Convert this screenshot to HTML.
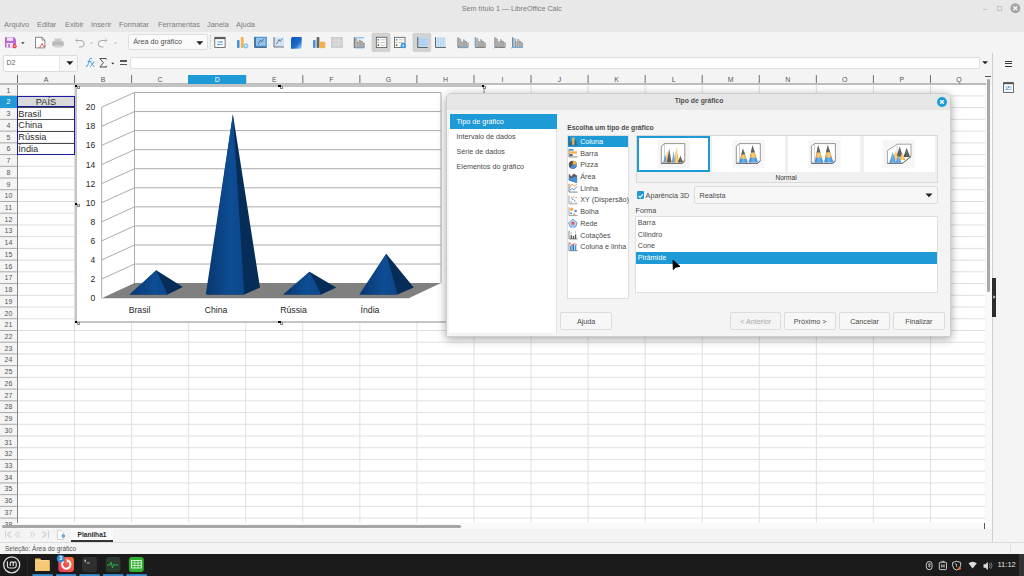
<!DOCTYPE html>
<html><head><meta charset="utf-8">
<style>
*{margin:0;padding:0;box-sizing:border-box}
html,body{width:1024px;height:576px;overflow:hidden;background:#f4f4f4;font-family:"Liberation Sans",sans-serif;color:#3c3c3c}
.a{position:absolute}
.t{position:absolute;white-space:nowrap;line-height:1}
</style></head><body>

<div class="a" style="left:0;top:0;width:1024px;height:32px;background:#e8e8e8"></div>
<div class="t" style="left:411.75px;top:5.6px;width:200px;text-align:center;font-size:7.15px;color:#7a7a7a">Sem título 1 — LibreOffice Calc</div>
<div class="t" style="left:4px;top:21.2px;font-size:7.4px;color:#7c7c7c">Arquivo</div>
<div class="t" style="left:37px;top:21.2px;font-size:7.4px;color:#7c7c7c">Editar</div>
<div class="t" style="left:65px;top:21.2px;font-size:7.4px;color:#7c7c7c">Exibir</div>
<div class="t" style="left:91px;top:21.2px;font-size:7.4px;color:#7c7c7c">Inserir</div>
<div class="t" style="left:119px;top:21.2px;font-size:7.4px;color:#7c7c7c">Formatar</div>
<div class="t" style="left:158px;top:21.2px;font-size:7.4px;color:#7c7c7c">Ferramentas</div>
<div class="t" style="left:207px;top:21.2px;font-size:7.4px;color:#7c7c7c">Janela</div>
<div class="t" style="left:236px;top:21.2px;font-size:7.4px;color:#7c7c7c">Ajuda</div>
<div class="a" style="left:0;top:32px;width:1024px;height:21px;background:#f4f4f4"></div>
<svg class="a" style="left:0;top:30px" width="540" height="26" viewBox="0 30 540 26"><path d="M5 37.2h9l2 2v8.3h-11z" fill="#b96ad0"/><rect x="7" y="37.6" width="6" height="3.2" fill="#f2e6f6"/><rect x="6.5" y="43" width="6.5" height="4.5" fill="#f2e6f6"/><rect x="8.3" y="44" width="1.6" height="3.5" fill="#b96ad0"/><circle cx="14.6" cy="46.3" r="2.1" fill="#e8474f"/><circle cx="14.6" cy="46.3" r="0.8" fill="#f8c8c8"/><path d="M21.2 42.2h3.4l-1.7 1.9z" fill="#222"/><path d="M35.5 37.3h6.5l2.8 2.8v7.8h-9.3z" fill="#fff" stroke="#555" stroke-width="0.7"/><path d="M42 37.3v2.8h2.8" fill="none" stroke="#555" stroke-width="0.6"/><path d="M39.5 48l2.5-4.5 1.5 3 2-0.5" fill="none" stroke="#e64a4a" stroke-width="0.9"/><rect x="54.5" y="38.5" width="7" height="3" fill="#c8c8c8"/><rect x="52.3" y="41.2" width="11.4" height="5" rx="1" fill="#b8b8b8"/><rect x="54.5" y="45" width="7" height="2.5" fill="#cfcfcf"/><path d="M75.5 40.5h5.5a3 3 0 0 1 0 6.5h-2" fill="none" stroke="#a8a8a8" stroke-width="1"/><path d="M77.8 38.2l-2.5 2.3 2.5 2.3" fill="none" stroke="#c8c8c8" stroke-width="1"/><path d="M90 42.4h3l-1.5 1.6z" fill="#b4b4b4"/><path d="M107 40.5h-5.5a3 3 0 0 0 0 6.5h2" fill="none" stroke="#a8a8a8" stroke-width="1"/><path d="M104.7 38.2l2.5 2.3-2.5 2.3" fill="none" stroke="#c8c8c8" stroke-width="1"/><path d="M114 42.4h3l-1.5 1.6z" fill="#b4b4b4"/><rect x="214.8" y="37.3" width="10.3" height="10.2" fill="#fff" stroke="#555" stroke-width="0.8"/><rect x="214.8" y="37.3" width="10.3" height="1.8" fill="#555"/><path d="M216.8 42h6.3M216.8 44.5h6.3" stroke="#3d8fd6" stroke-width="0.7"/><path d="M220.8 41v2M218.8 43.5v2" stroke="#3d8fd6" stroke-width="0.8"/><rect x="237" y="40" width="2.6" height="8" rx="0.8" fill="#4a90d9"/><rect x="240.8" y="37" width="2.8" height="11" rx="0.8" fill="#f3b04c"/><circle cx="245.8" cy="45.8" r="2.6" fill="#8cc4ef"/><circle cx="245.8" cy="45.8" r="1" fill="#f4f4f4"/><rect x="254" y="36.8" width="12.8" height="11" fill="#3d8fd6"/><rect x="255.8" y="37.8" width="9.8" height="8" fill="#90c4ee"/><path d="M255.2 37v10.3h11.3" stroke="#555" stroke-width="0.8" fill="none"/><path d="M258 44.5l2.5-4.5 1.2 2 2-3" stroke="#555" stroke-width="0.7" fill="none"/><rect x="273.5" y="37.5" width="10.5" height="9.5" fill="#cfe3f6"/><path d="M274 37v10h10" stroke="#555" stroke-width="0.8" fill="none"/><path d="M276.5 44l2.5-4.5 1.2 2 2-3" stroke="#555" stroke-width="0.7" fill="none"/><defs><linearGradient id="bg1" x1="0" y1="0" x2="1" y2="1"><stop offset="0" stop-color="#0a55b8"/><stop offset="0.6" stop-color="#1a6ccc"/><stop offset="1" stop-color="#bcd8f2"/></linearGradient></defs><path d="M292 37h9.7v10.3l-1.5 1.4h-9.2v-10.2z" fill="url(#bg1)"/><rect x="313" y="40" width="2.6" height="8" rx="0.8" fill="#4a90d9"/><rect x="316.6" y="37" width="2.8" height="11" rx="0.8" fill="#666"/><ellipse cx="322.4" cy="42.8" rx="2.9" ry="1.3" fill="#f3b04c"/><rect x="319.5" y="42.8" width="5.8" height="4.2" fill="#f3b04c"/><ellipse cx="322.4" cy="47" rx="2.9" ry="1.3" fill="#f3b04c"/><rect x="331.3" y="37.3" width="11" height="10.3" fill="#d0d0d0" stroke="#bdbdbd" stroke-width="0.6"/><path d="M331.3 40.7h11M331.3 44.1h11M335 37.3v10.3M338.6 37.3v10.3" stroke="#e6e6e6" stroke-width="0.5"/><rect x="354" y="37" width="10" height="1.4" fill="#8cc4ef"/><path d="M354.3 37.5v10h10" stroke="#3a3a3a" stroke-width="0.8" fill="none"/><rect x="355.7" y="39" width="1.3" height="8.5" fill="#c8c8c8" stroke="#6a6a6a" stroke-width="0.4"/><rect x="357.6" y="42" width="1.3" height="5.5" fill="#c8c8c8" stroke="#6a6a6a" stroke-width="0.4"/><rect x="359.5" y="40" width="1.3" height="7.5" fill="#c8c8c8" stroke="#6a6a6a" stroke-width="0.4"/><rect x="361.4" y="41.5" width="1.3" height="6" fill="#c8c8c8" stroke="#6a6a6a" stroke-width="0.4"/><rect x="363.3" y="43" width="1.3" height="4.5" fill="#c8c8c8" stroke="#6a6a6a" stroke-width="0.4"/><rect x="355" y="47.5" width="9" height="1" fill="#8cc4ef"/><rect x="372" y="33.2" width="18" height="18.4" rx="1.5" fill="#d2d2d2" stroke="#c2c2c2" stroke-width="0.6"/><rect x="376.3" y="37.3" width="10.5" height="10.3" fill="#fff" stroke="#555" stroke-width="0.8"/><rect x="377.6" y="39" width="1.5" height="1.5" fill="#3d8fd6"/><rect x="377.6" y="41.7" width="1.5" height="1.5" fill="#f3a04c"/><rect x="377.6" y="44.4" width="1.5" height="1.5" fill="#555"/><path d="M380.3 39.8h5M380.3 42.5h5M380.3 45.2h5" stroke="#999" stroke-width="0.6"/><rect x="394.5" y="37.3" width="10.5" height="10.3" fill="#fff" stroke="#555" stroke-width="0.8"/><rect x="395.8" y="39" width="1.5" height="1.5" fill="#3d8fd6"/><rect x="395.8" y="41.7" width="1.5" height="1.5" fill="#f3a04c"/><rect x="395.8" y="44.4" width="1.5" height="1.5" fill="#555"/><path d="M398.5 39.8h5M398.5 42.5h5" stroke="#999" stroke-width="0.6"/><circle cx="403.3" cy="45.5" r="2.7" fill="#3d9ee6"/><circle cx="403.3" cy="45.5" r="1" fill="#d8ecfa"/><rect x="413" y="33.2" width="17.7" height="18.4" rx="1.5" fill="#d2d2d2" stroke="#c2c2c2" stroke-width="0.6"/><rect x="418" y="37.3" width="9.5" height="9.8" fill="#b9d9f3"/><path d="M418 39.7h9.5M418 42.1h9.5M418 44.5h9.5" stroke="#8abde8" stroke-width="0.5"/><path d="M417.7 37v10.5h10" stroke="#444" stroke-width="0.8" fill="none"/><rect x="435.8" y="37.3" width="10" height="9.8" fill="#cfe5f7"/><path d="M438.3 37.3v9.8M440.8 37.3v9.8M443.3 37.3v9.8" stroke="#8abde8" stroke-width="0.5"/><path d="M435.5 37v10.5h10.5" stroke="#444" stroke-width="0.8" fill="none"/><path d="M458 37.3v10h10" stroke="#3a3a3a" stroke-width="0.8" fill="none"/><rect x="459.4" y="38.8" width="1.3" height="8.5" fill="#c8c8c8" stroke="#6a6a6a" stroke-width="0.4"/><rect x="461.3" y="41.8" width="1.3" height="5.5" fill="#c8c8c8" stroke="#6a6a6a" stroke-width="0.4"/><rect x="463.2" y="39.8" width="1.3" height="7.5" fill="#c8c8c8" stroke="#6a6a6a" stroke-width="0.4"/><rect x="465.1" y="41.3" width="1.3" height="6" fill="#c8c8c8" stroke="#6a6a6a" stroke-width="0.4"/><rect x="467" y="42.8" width="1.3" height="4.5" fill="#c8c8c8" stroke="#6a6a6a" stroke-width="0.4"/><rect x="459" y="47.3" width="9" height="0.9" fill="#6db3ec"/><path d="M475.3 37.3v10h10" stroke="#3a3a3a" stroke-width="0.8" fill="none"/><rect x="476.7" y="38.8" width="1.3" height="8.5" fill="#c8c8c8" stroke="#6a6a6a" stroke-width="0.4"/><rect x="478.6" y="41.8" width="1.3" height="5.5" fill="#c8c8c8" stroke="#6a6a6a" stroke-width="0.4"/><rect x="480.5" y="39.8" width="1.3" height="7.5" fill="#c8c8c8" stroke="#6a6a6a" stroke-width="0.4"/><rect x="482.4" y="41.3" width="1.3" height="6" fill="#c8c8c8" stroke="#6a6a6a" stroke-width="0.4"/><rect x="484.3" y="42.8" width="1.3" height="4.5" fill="#c8c8c8" stroke="#6a6a6a" stroke-width="0.4"/><rect x="475" y="37.5" width="0.9" height="10" fill="#6db3ec"/><path d="M495 37.3v10h10" stroke="#3a3a3a" stroke-width="0.8" fill="none"/><rect x="496.4" y="38.8" width="1.3" height="8.5" fill="#c8c8c8" stroke="#6a6a6a" stroke-width="0.4"/><rect x="498.3" y="41.8" width="1.3" height="5.5" fill="#c8c8c8" stroke="#6a6a6a" stroke-width="0.4"/><rect x="500.2" y="39.8" width="1.3" height="7.5" fill="#c8c8c8" stroke="#6a6a6a" stroke-width="0.4"/><rect x="502.1" y="41.3" width="1.3" height="6" fill="#c8c8c8" stroke="#6a6a6a" stroke-width="0.4"/><rect x="504" y="42.8" width="1.3" height="4.5" fill="#c8c8c8" stroke="#6a6a6a" stroke-width="0.4"/><path d="M493.6 48.5l3-2.8" stroke="#6db3ec" stroke-width="0.9"/><path d="M512.5 37.3v10h10" stroke="#3a3a3a" stroke-width="0.8" fill="none"/><rect x="513.9" y="38.8" width="1.3" height="8.5" fill="#c8c8c8" stroke="#6a6a6a" stroke-width="0.4"/><rect x="515.8" y="41.8" width="1.3" height="5.5" fill="#c8c8c8" stroke="#6a6a6a" stroke-width="0.4"/><rect x="517.7" y="39.8" width="1.3" height="7.5" fill="#c8c8c8" stroke="#6a6a6a" stroke-width="0.4"/><rect x="519.6" y="41.3" width="1.3" height="6" fill="#c8c8c8" stroke="#6a6a6a" stroke-width="0.4"/><rect x="521.5" y="42.8" width="1.3" height="4.5" fill="#c8c8c8" stroke="#6a6a6a" stroke-width="0.4"/><path d="M511 48.5l3-2.8" stroke="#6db3ec" stroke-width="0.9"/><rect x="512.5" y="37.5" width="0.9" height="10" fill="#6db3ec"/><rect x="513" y="47" width="9" height="0.9" fill="#6db3ec"/></svg>
<div class="a" style="left:127.8px;top:33.8px;width:80.4px;height:16.5px;background:#fafafa;border:1px solid #dedede;border-radius:2px"></div>
<div class="t" style="left:133.3px;top:38.4px;font-size:7.2px;color:#505050">Área do gráfico</div>
<svg class="a" style="left:196px;top:40.5px" width="8" height="5"><path d="M0.3 0.3H7.3L3.8 4Z" fill="#222"/></svg>
<div class="a" style="left:209.5px;top:35px;width:0;height:14px;border-left:1px dotted #c0c0c0"></div>
<div class="a" style="left:2.5px;top:54.6px;width:75.7px;height:17px;background:#fff;border:1px solid #dcdcdc;border-radius:2px"></div>
<div class="a" style="left:58.5px;top:55.6px;width:18.7px;height:15px;background:#f7f7f7;border-left:1px solid #e6e6e6"></div>
<svg class="a" style="left:65.5px;top:60.5px" width="8" height="5"><path d="M0.3 0.3H7.3L3.8 4Z" fill="#222"/></svg>
<div class="t" style="left:6.5px;top:59.3px;font-size:7px;color:#666">D2</div>
<svg class="a" style="left:0;top:50px" width="130" height="24" viewBox="0 50 130 24"><path d="M85.8 66.6Q87.6 67.2 88.4 63.5L89.4 59.8Q90.1 57.7 92.2 58.4M87.6 61.4H90.8" fill="none" stroke="#4a9ee0" stroke-width="1"/><path d="M90.3 61.6L94.3 66.8M94.3 61.6L90.3 66.8" stroke="#4a9ee0" stroke-width="1"/><path d="M106.2 59.6V58.5H99.9L103.4 62.8L99.9 67H106.4V65.9" fill="none" stroke="#3c3c3c" stroke-width="0.9"/><path d="M111.2 62.7H114.3L112.75 64.4Z" fill="#222"/></svg>
<div class="a" style="left:120.1px;top:60.3px;width:6.7px;height:1.3px;background:#555"></div>
<div class="a" style="left:120.1px;top:63.8px;width:6.7px;height:1.3px;background:#555"></div>
<div class="a" style="left:129.8px;top:57.4px;width:850.5px;height:11.2px;background:#fff;border:1px solid #dedede;border-radius:2px"></div>
<svg class="a" style="left:982px;top:61px" width="7" height="4"><path d="M0.2 0.2H6L3.1 3.2Z" fill="#222"/></svg>
<div class="a" style="left:0;top:75px;width:986px;height:9.5px;background:#f4f4f4"></div>
<div class="a" style="left:17.5px;top:84.2px;width:967.5px;height:438.5px;background:#fff"></div>
<div class="a" style="left:0;top:84.2px;width:17.5px;height:438.5px;background:#f4f4f4"></div>
<div class="a" style="left:17px;top:84.2px;width:1px;height:438.5px;background:#858585"></div>
<svg class="a" style="left:0;top:0" width="1024" height="576"><line x1="18" x2="985" y1="95.93" y2="95.93" stroke="#e0e0e0" stroke-width="1"/><line x1="0" x2="17" y1="95.93" y2="95.93" stroke="#a8a8a8" stroke-width="1"/><line x1="18" x2="985" y1="107.65" y2="107.65" stroke="#e0e0e0" stroke-width="1"/><line x1="0" x2="17" y1="107.65" y2="107.65" stroke="#a8a8a8" stroke-width="1"/><line x1="18" x2="985" y1="119.38" y2="119.38" stroke="#e0e0e0" stroke-width="1"/><line x1="0" x2="17" y1="119.38" y2="119.38" stroke="#a8a8a8" stroke-width="1"/><line x1="18" x2="985" y1="131.11" y2="131.11" stroke="#e0e0e0" stroke-width="1"/><line x1="0" x2="17" y1="131.11" y2="131.11" stroke="#a8a8a8" stroke-width="1"/><line x1="18" x2="985" y1="142.84" y2="142.84" stroke="#e0e0e0" stroke-width="1"/><line x1="0" x2="17" y1="142.84" y2="142.84" stroke="#a8a8a8" stroke-width="1"/><line x1="18" x2="985" y1="154.56" y2="154.56" stroke="#e0e0e0" stroke-width="1"/><line x1="0" x2="17" y1="154.56" y2="154.56" stroke="#a8a8a8" stroke-width="1"/><line x1="18" x2="985" y1="166.29" y2="166.29" stroke="#e0e0e0" stroke-width="1"/><line x1="0" x2="17" y1="166.29" y2="166.29" stroke="#a8a8a8" stroke-width="1"/><line x1="18" x2="985" y1="178.02" y2="178.02" stroke="#e0e0e0" stroke-width="1"/><line x1="0" x2="17" y1="178.02" y2="178.02" stroke="#a8a8a8" stroke-width="1"/><line x1="18" x2="985" y1="189.74" y2="189.74" stroke="#e0e0e0" stroke-width="1"/><line x1="0" x2="17" y1="189.74" y2="189.74" stroke="#a8a8a8" stroke-width="1"/><line x1="18" x2="985" y1="201.47" y2="201.47" stroke="#e0e0e0" stroke-width="1"/><line x1="0" x2="17" y1="201.47" y2="201.47" stroke="#a8a8a8" stroke-width="1"/><line x1="18" x2="985" y1="213.2" y2="213.2" stroke="#e0e0e0" stroke-width="1"/><line x1="0" x2="17" y1="213.2" y2="213.2" stroke="#a8a8a8" stroke-width="1"/><line x1="18" x2="985" y1="224.92" y2="224.92" stroke="#e0e0e0" stroke-width="1"/><line x1="0" x2="17" y1="224.92" y2="224.92" stroke="#a8a8a8" stroke-width="1"/><line x1="18" x2="985" y1="236.65" y2="236.65" stroke="#e0e0e0" stroke-width="1"/><line x1="0" x2="17" y1="236.65" y2="236.65" stroke="#a8a8a8" stroke-width="1"/><line x1="18" x2="985" y1="248.38" y2="248.38" stroke="#e0e0e0" stroke-width="1"/><line x1="0" x2="17" y1="248.38" y2="248.38" stroke="#a8a8a8" stroke-width="1"/><line x1="18" x2="985" y1="260.11" y2="260.11" stroke="#e0e0e0" stroke-width="1"/><line x1="0" x2="17" y1="260.11" y2="260.11" stroke="#a8a8a8" stroke-width="1"/><line x1="18" x2="985" y1="271.83" y2="271.83" stroke="#e0e0e0" stroke-width="1"/><line x1="0" x2="17" y1="271.83" y2="271.83" stroke="#a8a8a8" stroke-width="1"/><line x1="18" x2="985" y1="283.56" y2="283.56" stroke="#e0e0e0" stroke-width="1"/><line x1="0" x2="17" y1="283.56" y2="283.56" stroke="#a8a8a8" stroke-width="1"/><line x1="18" x2="985" y1="295.29" y2="295.29" stroke="#e0e0e0" stroke-width="1"/><line x1="0" x2="17" y1="295.29" y2="295.29" stroke="#a8a8a8" stroke-width="1"/><line x1="18" x2="985" y1="307.01" y2="307.01" stroke="#e0e0e0" stroke-width="1"/><line x1="0" x2="17" y1="307.01" y2="307.01" stroke="#a8a8a8" stroke-width="1"/><line x1="18" x2="985" y1="318.74" y2="318.74" stroke="#e0e0e0" stroke-width="1"/><line x1="0" x2="17" y1="318.74" y2="318.74" stroke="#a8a8a8" stroke-width="1"/><line x1="18" x2="985" y1="330.47" y2="330.47" stroke="#e0e0e0" stroke-width="1"/><line x1="0" x2="17" y1="330.47" y2="330.47" stroke="#a8a8a8" stroke-width="1"/><line x1="18" x2="985" y1="342.19" y2="342.19" stroke="#e0e0e0" stroke-width="1"/><line x1="0" x2="17" y1="342.19" y2="342.19" stroke="#a8a8a8" stroke-width="1"/><line x1="18" x2="985" y1="353.92" y2="353.92" stroke="#e0e0e0" stroke-width="1"/><line x1="0" x2="17" y1="353.92" y2="353.92" stroke="#a8a8a8" stroke-width="1"/><line x1="18" x2="985" y1="365.65" y2="365.65" stroke="#e0e0e0" stroke-width="1"/><line x1="0" x2="17" y1="365.65" y2="365.65" stroke="#a8a8a8" stroke-width="1"/><line x1="18" x2="985" y1="377.38" y2="377.38" stroke="#e0e0e0" stroke-width="1"/><line x1="0" x2="17" y1="377.38" y2="377.38" stroke="#a8a8a8" stroke-width="1"/><line x1="18" x2="985" y1="389.1" y2="389.1" stroke="#e0e0e0" stroke-width="1"/><line x1="0" x2="17" y1="389.1" y2="389.1" stroke="#a8a8a8" stroke-width="1"/><line x1="18" x2="985" y1="400.83" y2="400.83" stroke="#e0e0e0" stroke-width="1"/><line x1="0" x2="17" y1="400.83" y2="400.83" stroke="#a8a8a8" stroke-width="1"/><line x1="18" x2="985" y1="412.56" y2="412.56" stroke="#e0e0e0" stroke-width="1"/><line x1="0" x2="17" y1="412.56" y2="412.56" stroke="#a8a8a8" stroke-width="1"/><line x1="18" x2="985" y1="424.28" y2="424.28" stroke="#e0e0e0" stroke-width="1"/><line x1="0" x2="17" y1="424.28" y2="424.28" stroke="#a8a8a8" stroke-width="1"/><line x1="18" x2="985" y1="436.01" y2="436.01" stroke="#e0e0e0" stroke-width="1"/><line x1="0" x2="17" y1="436.01" y2="436.01" stroke="#a8a8a8" stroke-width="1"/><line x1="18" x2="985" y1="447.74" y2="447.74" stroke="#e0e0e0" stroke-width="1"/><line x1="0" x2="17" y1="447.74" y2="447.74" stroke="#a8a8a8" stroke-width="1"/><line x1="18" x2="985" y1="459.46" y2="459.46" stroke="#e0e0e0" stroke-width="1"/><line x1="0" x2="17" y1="459.46" y2="459.46" stroke="#a8a8a8" stroke-width="1"/><line x1="18" x2="985" y1="471.19" y2="471.19" stroke="#e0e0e0" stroke-width="1"/><line x1="0" x2="17" y1="471.19" y2="471.19" stroke="#a8a8a8" stroke-width="1"/><line x1="18" x2="985" y1="482.92" y2="482.92" stroke="#e0e0e0" stroke-width="1"/><line x1="0" x2="17" y1="482.92" y2="482.92" stroke="#a8a8a8" stroke-width="1"/><line x1="18" x2="985" y1="494.64" y2="494.64" stroke="#e0e0e0" stroke-width="1"/><line x1="0" x2="17" y1="494.64" y2="494.64" stroke="#a8a8a8" stroke-width="1"/><line x1="18" x2="985" y1="506.37" y2="506.37" stroke="#e0e0e0" stroke-width="1"/><line x1="0" x2="17" y1="506.37" y2="506.37" stroke="#a8a8a8" stroke-width="1"/><line x1="18" x2="985" y1="518.1" y2="518.1" stroke="#e0e0e0" stroke-width="1"/><line x1="0" x2="17" y1="518.1" y2="518.1" stroke="#a8a8a8" stroke-width="1"/><line x1="74.56" x2="74.56" y1="84.2" y2="522.7" stroke="#e0e0e0" stroke-width="1"/><line x1="74.56" x2="74.56" y1="75" y2="83.5" stroke="#6e6e6e" stroke-width="1"/><line x1="131.62" x2="131.62" y1="84.2" y2="522.7" stroke="#e0e0e0" stroke-width="1"/><line x1="131.62" x2="131.62" y1="75" y2="83.5" stroke="#6e6e6e" stroke-width="1"/><line x1="188.68" x2="188.68" y1="84.2" y2="522.7" stroke="#e0e0e0" stroke-width="1"/><line x1="188.68" x2="188.68" y1="75" y2="83.5" stroke="#6e6e6e" stroke-width="1"/><line x1="245.74" x2="245.74" y1="84.2" y2="522.7" stroke="#e0e0e0" stroke-width="1"/><line x1="245.74" x2="245.74" y1="75" y2="83.5" stroke="#6e6e6e" stroke-width="1"/><line x1="302.8" x2="302.8" y1="84.2" y2="522.7" stroke="#e0e0e0" stroke-width="1"/><line x1="302.8" x2="302.8" y1="75" y2="83.5" stroke="#6e6e6e" stroke-width="1"/><line x1="359.86" x2="359.86" y1="84.2" y2="522.7" stroke="#e0e0e0" stroke-width="1"/><line x1="359.86" x2="359.86" y1="75" y2="83.5" stroke="#6e6e6e" stroke-width="1"/><line x1="416.92" x2="416.92" y1="84.2" y2="522.7" stroke="#e0e0e0" stroke-width="1"/><line x1="416.92" x2="416.92" y1="75" y2="83.5" stroke="#6e6e6e" stroke-width="1"/><line x1="473.98" x2="473.98" y1="84.2" y2="522.7" stroke="#e0e0e0" stroke-width="1"/><line x1="473.98" x2="473.98" y1="75" y2="83.5" stroke="#6e6e6e" stroke-width="1"/><line x1="531.04" x2="531.04" y1="84.2" y2="522.7" stroke="#e0e0e0" stroke-width="1"/><line x1="531.04" x2="531.04" y1="75" y2="83.5" stroke="#6e6e6e" stroke-width="1"/><line x1="588.1" x2="588.1" y1="84.2" y2="522.7" stroke="#e0e0e0" stroke-width="1"/><line x1="588.1" x2="588.1" y1="75" y2="83.5" stroke="#6e6e6e" stroke-width="1"/><line x1="645.16" x2="645.16" y1="84.2" y2="522.7" stroke="#e0e0e0" stroke-width="1"/><line x1="645.16" x2="645.16" y1="75" y2="83.5" stroke="#6e6e6e" stroke-width="1"/><line x1="702.22" x2="702.22" y1="84.2" y2="522.7" stroke="#e0e0e0" stroke-width="1"/><line x1="702.22" x2="702.22" y1="75" y2="83.5" stroke="#6e6e6e" stroke-width="1"/><line x1="759.28" x2="759.28" y1="84.2" y2="522.7" stroke="#e0e0e0" stroke-width="1"/><line x1="759.28" x2="759.28" y1="75" y2="83.5" stroke="#6e6e6e" stroke-width="1"/><line x1="816.34" x2="816.34" y1="84.2" y2="522.7" stroke="#e0e0e0" stroke-width="1"/><line x1="816.34" x2="816.34" y1="75" y2="83.5" stroke="#6e6e6e" stroke-width="1"/><line x1="873.4" x2="873.4" y1="84.2" y2="522.7" stroke="#e0e0e0" stroke-width="1"/><line x1="873.4" x2="873.4" y1="75" y2="83.5" stroke="#6e6e6e" stroke-width="1"/><line x1="930.46" x2="930.46" y1="84.2" y2="522.7" stroke="#e0e0e0" stroke-width="1"/><line x1="930.46" x2="930.46" y1="75" y2="83.5" stroke="#6e6e6e" stroke-width="1"/><line x1="17.5" x2="17.5" y1="75" y2="84.5" stroke="#6a6a6a" stroke-width="1"/></svg>
<div class="a" style="left:0;top:82.9px;width:986px;height:2px;background:#bdbdbd"></div>
<div class="t" style="left:17.5px;top:75.6px;width:57px;text-align:center;font-size:7px;color:#555">A</div>
<div class="t" style="left:74.56px;top:75.6px;width:57px;text-align:center;font-size:7px;color:#555">B</div>
<div class="t" style="left:131.62px;top:75.6px;width:57px;text-align:center;font-size:7px;color:#555">C</div>
<div class="a" style="left:188.18px;top:75px;width:58px;height:9px;background:#1e9ad6"></div>
<div class="t" style="left:188.68px;top:75.6px;width:57px;text-align:center;font-size:7px;color:#fff">D</div>
<div class="t" style="left:245.74px;top:75.6px;width:57px;text-align:center;font-size:7px;color:#555">E</div>
<div class="t" style="left:302.8px;top:75.6px;width:57px;text-align:center;font-size:7px;color:#555">F</div>
<div class="t" style="left:359.86px;top:75.6px;width:57px;text-align:center;font-size:7px;color:#555">G</div>
<div class="t" style="left:416.92px;top:75.6px;width:57px;text-align:center;font-size:7px;color:#555">H</div>
<div class="t" style="left:473.98px;top:75.6px;width:57px;text-align:center;font-size:7px;color:#555">I</div>
<div class="t" style="left:531.04px;top:75.6px;width:57px;text-align:center;font-size:7px;color:#555">J</div>
<div class="t" style="left:588.1px;top:75.6px;width:57px;text-align:center;font-size:7px;color:#555">K</div>
<div class="t" style="left:645.16px;top:75.6px;width:57px;text-align:center;font-size:7px;color:#555">L</div>
<div class="t" style="left:702.22px;top:75.6px;width:57px;text-align:center;font-size:7px;color:#555">M</div>
<div class="t" style="left:759.28px;top:75.6px;width:57px;text-align:center;font-size:7px;color:#555">N</div>
<div class="t" style="left:816.34px;top:75.6px;width:57px;text-align:center;font-size:7px;color:#555">O</div>
<div class="t" style="left:873.4px;top:75.6px;width:57px;text-align:center;font-size:7px;color:#555">P</div>
<div class="t" style="left:930.46px;top:75.6px;width:57px;text-align:center;font-size:7px;color:#555">Q</div>
<div class="t" style="left:0;top:86.7px;width:17px;text-align:center;font-size:7px;color:#555">1</div>
<div class="a" style="left:0;top:95.93px;width:17px;height:11.73px;background:#1e9ad6"></div>
<div class="t" style="left:0;top:98.43px;width:17px;text-align:center;font-size:7px;color:#fff">2</div>
<div class="t" style="left:0;top:110.15px;width:17px;text-align:center;font-size:7px;color:#555">3</div>
<div class="t" style="left:0;top:121.88px;width:17px;text-align:center;font-size:7px;color:#555">4</div>
<div class="t" style="left:0;top:133.61px;width:17px;text-align:center;font-size:7px;color:#555">5</div>
<div class="t" style="left:0;top:145.34px;width:17px;text-align:center;font-size:7px;color:#555">6</div>
<div class="t" style="left:0;top:157.06px;width:17px;text-align:center;font-size:7px;color:#555">7</div>
<div class="t" style="left:0;top:168.79px;width:17px;text-align:center;font-size:7px;color:#555">8</div>
<div class="t" style="left:0;top:180.52px;width:17px;text-align:center;font-size:7px;color:#555">9</div>
<div class="t" style="left:0;top:192.24px;width:17px;text-align:center;font-size:7px;color:#555">10</div>
<div class="t" style="left:0;top:203.97px;width:17px;text-align:center;font-size:7px;color:#555">11</div>
<div class="t" style="left:0;top:215.7px;width:17px;text-align:center;font-size:7px;color:#555">12</div>
<div class="t" style="left:0;top:227.42px;width:17px;text-align:center;font-size:7px;color:#555">13</div>
<div class="t" style="left:0;top:239.15px;width:17px;text-align:center;font-size:7px;color:#555">14</div>
<div class="t" style="left:0;top:250.88px;width:17px;text-align:center;font-size:7px;color:#555">15</div>
<div class="t" style="left:0;top:262.61px;width:17px;text-align:center;font-size:7px;color:#555">16</div>
<div class="t" style="left:0;top:274.33px;width:17px;text-align:center;font-size:7px;color:#555">17</div>
<div class="t" style="left:0;top:286.06px;width:17px;text-align:center;font-size:7px;color:#555">18</div>
<div class="t" style="left:0;top:297.79px;width:17px;text-align:center;font-size:7px;color:#555">19</div>
<div class="t" style="left:0;top:309.51px;width:17px;text-align:center;font-size:7px;color:#555">20</div>
<div class="t" style="left:0;top:321.24px;width:17px;text-align:center;font-size:7px;color:#555">21</div>
<div class="t" style="left:0;top:332.97px;width:17px;text-align:center;font-size:7px;color:#555">22</div>
<div class="t" style="left:0;top:344.69px;width:17px;text-align:center;font-size:7px;color:#555">23</div>
<div class="t" style="left:0;top:356.42px;width:17px;text-align:center;font-size:7px;color:#555">24</div>
<div class="t" style="left:0;top:368.15px;width:17px;text-align:center;font-size:7px;color:#555">25</div>
<div class="t" style="left:0;top:379.88px;width:17px;text-align:center;font-size:7px;color:#555">26</div>
<div class="t" style="left:0;top:391.6px;width:17px;text-align:center;font-size:7px;color:#555">27</div>
<div class="t" style="left:0;top:403.33px;width:17px;text-align:center;font-size:7px;color:#555">28</div>
<div class="t" style="left:0;top:415.06px;width:17px;text-align:center;font-size:7px;color:#555">29</div>
<div class="t" style="left:0;top:426.78px;width:17px;text-align:center;font-size:7px;color:#555">30</div>
<div class="t" style="left:0;top:438.51px;width:17px;text-align:center;font-size:7px;color:#555">31</div>
<div class="t" style="left:0;top:450.24px;width:17px;text-align:center;font-size:7px;color:#555">32</div>
<div class="t" style="left:0;top:461.96px;width:17px;text-align:center;font-size:7px;color:#555">33</div>
<div class="t" style="left:0;top:473.69px;width:17px;text-align:center;font-size:7px;color:#555">34</div>
<div class="t" style="left:0;top:485.42px;width:17px;text-align:center;font-size:7px;color:#555">35</div>
<div class="t" style="left:0;top:497.14px;width:17px;text-align:center;font-size:7px;color:#555">36</div>
<div class="t" style="left:0;top:508.87px;width:17px;text-align:center;font-size:7px;color:#555">37</div>
<div class="t" style="left:0;top:520.6px;width:17px;text-align:center;font-size:7px;color:#555">38</div>
<div class="a" style="left:17.5px;top:95.93px;width:57px;height:11.73px;background:#d9d9d9"></div>
<div class="t" style="left:17.5px;top:97.93px;width:57px;text-align:center;font-size:9.2px;color:#2e2e2e">PAÍS</div>
<div class="t" style="left:18.3px;top:109.65px;font-size:9.2px;color:#2e2e2e">Brasil</div>
<div class="t" style="left:18.3px;top:121.38px;font-size:9.2px;color:#2e2e2e">China</div>
<div class="t" style="left:18.3px;top:133.11px;font-size:9.2px;color:#2e2e2e">Rússia</div>
<div class="t" style="left:18.3px;top:144.84px;font-size:9.2px;color:#2e2e2e">Índia</div>
<div class="a" style="left:18px;top:107.35px;width:56.5px;height:1.1px;background:#4a4a4a"></div>
<div class="a" style="left:18px;top:119.08px;width:56.5px;height:1.1px;background:#4a4a4a"></div>
<div class="a" style="left:18px;top:130.81px;width:56.5px;height:1.1px;background:#4a4a4a"></div>
<div class="a" style="left:18px;top:142.53px;width:56.5px;height:1.1px;background:#4a4a4a"></div>
<div class="a" style="left:18px;top:106.25px;width:56.5px;height:1.1px;background:#1a1aa0"></div>
<div class="a" style="left:17.4px;top:95.63px;width:57.3px;height:59.54px;border:1.3px solid #1a1aa0"></div>
<div class="a" style="left:75px;top:84.5px;width:410px;height:238.3px;background:#fff;border:2px solid #c4c4c4"></div>
<div class="a" style="left:75px;top:83.9px;width:410px;height:3px;background:#c3c3c3"></div>
<div class="a" style="left:76.5px;top:86.1px;width:3px;height:3px;border:0.6px solid #888;background:#fff"></div>
<div class="a" style="left:75.1px;top:84.7px;width:2.2px;height:2.2px;background:#000"></div>
<div class="a" style="left:279.8px;top:86.1px;width:3px;height:3px;border:0.6px solid #888;background:#fff"></div>
<div class="a" style="left:278.4px;top:84.7px;width:2.2px;height:2.2px;background:#000"></div>
<div class="a" style="left:483.3px;top:86.1px;width:3px;height:3px;border:0.6px solid #888;background:#fff"></div>
<div class="a" style="left:481.9px;top:84.7px;width:2.2px;height:2.2px;background:#000"></div>
<div class="a" style="left:76.5px;top:204.3px;width:3px;height:3px;border:0.6px solid #888;background:#fff"></div>
<div class="a" style="left:75.1px;top:202.9px;width:2.2px;height:2.2px;background:#000"></div>
<div class="a" style="left:76.5px;top:322.3px;width:3px;height:3px;border:0.6px solid #888;background:#fff"></div>
<div class="a" style="left:75.1px;top:320.9px;width:2.2px;height:2.2px;background:#000"></div>
<div class="a" style="left:279.8px;top:322.3px;width:3px;height:3px;border:0.6px solid #888;background:#fff"></div>
<div class="a" style="left:278.4px;top:320.9px;width:2.2px;height:2.2px;background:#000"></div>
<svg class="a" style="left:0;top:0" width="1024" height="576"><defs><linearGradient id="pf" x1="0" x2="1" y1="0" y2="0"><stop offset="0" stop-color="#083770"/><stop offset="0.65" stop-color="#0e4d94"/><stop offset="1" stop-color="#0b4689"/></linearGradient></defs><polygon points="101.7,298.2 134.5,283.1 441,283.1 408.7,298.2" fill="#808080"/><line x1="134.5" x2="441" y1="264.04" y2="264.04" stroke="#acacac" stroke-width="1"/><line x1="101.7" x2="134.5" y1="279.1" y2="264.04" stroke="#acacac" stroke-width="1"/><line x1="134.5" x2="441" y1="244.98" y2="244.98" stroke="#acacac" stroke-width="1"/><line x1="101.7" x2="134.5" y1="260" y2="244.98" stroke="#acacac" stroke-width="1"/><line x1="134.5" x2="441" y1="225.92" y2="225.92" stroke="#acacac" stroke-width="1"/><line x1="101.7" x2="134.5" y1="240.9" y2="225.92" stroke="#acacac" stroke-width="1"/><line x1="134.5" x2="441" y1="206.86" y2="206.86" stroke="#acacac" stroke-width="1"/><line x1="101.7" x2="134.5" y1="221.8" y2="206.86" stroke="#acacac" stroke-width="1"/><line x1="134.5" x2="441" y1="187.8" y2="187.8" stroke="#acacac" stroke-width="1"/><line x1="101.7" x2="134.5" y1="202.7" y2="187.8" stroke="#acacac" stroke-width="1"/><line x1="134.5" x2="441" y1="168.74" y2="168.74" stroke="#acacac" stroke-width="1"/><line x1="101.7" x2="134.5" y1="183.6" y2="168.74" stroke="#acacac" stroke-width="1"/><line x1="134.5" x2="441" y1="149.68" y2="149.68" stroke="#acacac" stroke-width="1"/><line x1="101.7" x2="134.5" y1="164.5" y2="149.68" stroke="#acacac" stroke-width="1"/><line x1="134.5" x2="441" y1="130.62" y2="130.62" stroke="#acacac" stroke-width="1"/><line x1="101.7" x2="134.5" y1="145.4" y2="130.62" stroke="#acacac" stroke-width="1"/><line x1="134.5" x2="441" y1="111.56" y2="111.56" stroke="#acacac" stroke-width="1"/><line x1="101.7" x2="134.5" y1="126.3" y2="111.56" stroke="#acacac" stroke-width="1"/><line x1="134.5" x2="441" y1="92.5" y2="92.5" stroke="#acacac" stroke-width="1"/><line x1="101.7" x2="134.5" y1="107.2" y2="92.5" stroke="#acacac" stroke-width="1"/><line x1="134.5" x2="134.5" y1="92.5" y2="283.1" stroke="#acacac" stroke-width="1"/><line x1="441" x2="441" y1="92.5" y2="283.1" stroke="#acacac" stroke-width="1"/><line x1="101.7" x2="101.7" y1="107.2" y2="298.2" stroke="#acacac" stroke-width="1"/><polygon points="156.25,270.2 130.4,294.6 167.7,294.6 182.8,286.9" fill="#062c58"/><polygon points="156.25,270.2 129.4,294.6 167.7,294.6" fill="url(#pf)"/><polygon points="232.9,114.3 206.8,294.4 244.3,294.4 260,287.6" fill="#062c58"/><polygon points="232.9,114.3 205.8,294.4 244.3,294.4" fill="url(#pf)"/><polygon points="309.5,271.75 284,294.4 321.25,294.4 336.25,287.5" fill="#062c58"/><polygon points="309.5,271.75 283,294.4 321.25,294.4" fill="url(#pf)"/><polygon points="386.25,253.75 360.25,294.4 397.5,294.4 413.75,287.5" fill="#062c58"/><polygon points="386.25,253.75 359.25,294.4 397.5,294.4" fill="url(#pf)"/></svg>
<div class="t" style="left:70px;top:293.2px;width:25.3px;text-align:right;font-size:9.8px;color:#262626;transform:scaleX(0.87);transform-origin:right center">0</div>
<div class="t" style="left:70px;top:274.1px;width:25.3px;text-align:right;font-size:9.8px;color:#262626;transform:scaleX(0.87);transform-origin:right center">2</div>
<div class="t" style="left:70px;top:255px;width:25.3px;text-align:right;font-size:9.8px;color:#262626;transform:scaleX(0.87);transform-origin:right center">4</div>
<div class="t" style="left:70px;top:235.9px;width:25.3px;text-align:right;font-size:9.8px;color:#262626;transform:scaleX(0.87);transform-origin:right center">6</div>
<div class="t" style="left:70px;top:216.8px;width:25.3px;text-align:right;font-size:9.8px;color:#262626;transform:scaleX(0.87);transform-origin:right center">8</div>
<div class="t" style="left:70px;top:197.7px;width:25.3px;text-align:right;font-size:9.8px;color:#262626;transform:scaleX(0.87);transform-origin:right center">10</div>
<div class="t" style="left:70px;top:178.6px;width:25.3px;text-align:right;font-size:9.8px;color:#262626;transform:scaleX(0.87);transform-origin:right center">12</div>
<div class="t" style="left:70px;top:159.5px;width:25.3px;text-align:right;font-size:9.8px;color:#262626;transform:scaleX(0.87);transform-origin:right center">14</div>
<div class="t" style="left:70px;top:140.4px;width:25.3px;text-align:right;font-size:9.8px;color:#262626;transform:scaleX(0.87);transform-origin:right center">16</div>
<div class="t" style="left:70px;top:121.3px;width:25.3px;text-align:right;font-size:9.8px;color:#262626;transform:scaleX(0.87);transform-origin:right center">18</div>
<div class="t" style="left:70px;top:102.2px;width:25.3px;text-align:right;font-size:9.8px;color:#262626;transform:scaleX(0.87);transform-origin:right center">20</div>
<div class="t" style="left:109.5px;top:306.3px;width:60px;text-align:center;font-size:8.7px;color:#262626">Brasil</div>
<div class="t" style="left:186px;top:306.3px;width:60px;text-align:center;font-size:8.7px;color:#262626">China</div>
<div class="t" style="left:263.5px;top:306.3px;width:60px;text-align:center;font-size:8.7px;color:#262626">Rússia</div>
<div class="t" style="left:340px;top:306.3px;width:60px;text-align:center;font-size:8.7px;color:#262626">Índia</div>
<div class="a" style="left:446.3px;top:92.6px;width:505px;height:244.8px;background:#f4f4f4;border:1px solid #cdcdcd;border-radius:6px 6px 1px 1px;box-shadow:0 2px 10px rgba(0,0,0,.36)"></div>
<div class="a" style="left:447.3px;top:93.6px;width:503px;height:16.5px;background:#e6e6e6;border-radius:6px 6px 0 0"></div>
<div class="t" style="left:599px;top:98.3px;width:200px;text-align:center;font-size:6.8px;font-weight:bold;color:#505050">Tipo de gráfico</div>
<svg class="a" style="left:936.5px;top:97px" width="10" height="10"><circle cx="5" cy="5" r="4.9" fill="#1e9ad6"/><path d="M3.2 3.2L6.8 6.8M6.8 3.2L3.2 6.8" stroke="#fff" stroke-width="1.3"/></svg>
<div class="a" style="left:449px;top:113.8px;width:108px;height:219.2px;background:#fff;border-right:1px solid #e2e2e2"></div>
<div class="a" style="left:450px;top:113.8px;width:107px;height:15.4px;background:#1e9ad6"></div>
<div class="t" style="left:456.5px;top:117.8px;font-size:7.2px;color:#fff">Tipo de gráfico</div>
<div class="t" style="left:456.5px;top:132.8px;font-size:7.2px;color:#4a4a4a">Intervalo de dados</div>
<div class="t" style="left:456.5px;top:147.8px;font-size:7.2px;color:#4a4a4a">Série de dados</div>
<div class="t" style="left:456.5px;top:162.8px;font-size:7.2px;color:#4a4a4a">Elementos do gráfico</div>
<div class="t" style="left:567.2px;top:125.1px;font-size:6.78px;font-weight:bold;color:#4a4a4a">Escolha um tipo de gráfico</div>
<div class="a" style="left:567px;top:135px;width:61.5px;height:164.3px;background:#fff;border:1px solid #dedede"></div>
<div class="a" style="left:567.5px;top:135.6px;width:60.5px;height:11.2px;background:#1e9ad6"></div>
<div class="t" style="left:580.3px;top:137.8px;font-size:7.2px;color:#fff">Coluna</div>
<div class="t" style="left:580.3px;top:149.52px;font-size:7.2px;color:#4a4a4a">Barra</div>
<div class="t" style="left:580.3px;top:161.24px;font-size:7.2px;color:#4a4a4a">Pizza</div>
<div class="t" style="left:580.3px;top:172.96px;font-size:7.2px;color:#4a4a4a">Área</div>
<div class="t" style="left:580.3px;top:184.68px;font-size:7.2px;color:#4a4a4a">Linha</div>
<div class="t" style="left:580.3px;top:196.4px;font-size:7.2px;color:#4a4a4a">XY (Dispersão)</div>
<div class="t" style="left:580.3px;top:208.12px;font-size:7.2px;color:#4a4a4a">Bolha</div>
<div class="t" style="left:580.3px;top:219.84px;font-size:7.2px;color:#4a4a4a">Rede</div>
<div class="t" style="left:580.3px;top:231.56px;font-size:7.2px;color:#4a4a4a">Cotações</div>
<div class="t" style="left:580.3px;top:243.28px;font-size:7.2px;color:#4a4a4a">Coluna e linha</div>
<div class="a" style="left:635.5px;top:135.2px;width:302.5px;height:47.9px;background:#f0f0f0;border:1px solid #d9d9d9"></div>
<div class="a" style="left:636.6px;top:135.8px;width:73.8px;height:36.5px;background:#fff"></div>
<div class="a" style="left:711.8px;top:135.8px;width:73.2px;height:36.5px;background:#fff"></div>
<div class="a" style="left:788px;top:135.8px;width:72px;height:36.5px;background:#fff"></div>
<div class="a" style="left:863.7px;top:135.8px;width:71.7px;height:36.5px;background:#fff"></div>
<div class="a" style="left:636.6px;top:135.8px;width:73.8px;height:36.5px;border:2px solid #1e9ad6"></div>
<div class="t" style="left:736px;top:174.8px;width:100px;text-align:center;font-size:6.6px;color:#333">Normal</div>
<svg class="a" style="left:0;top:0" width="1024" height="576"><path d="M569 136.9v8h8.5" stroke="#2a4a6a" stroke-width="0.8" fill="none"/><rect x="570.2" y="141.5" width="1.8" height="3.3" fill="#4b5f73"/><rect x="572.1" y="137.5" width="2.4" height="7.3" fill="#f3b04c"/><rect x="574.6" y="140.5" width="1.8" height="4.3" fill="#4b5f73"/><path d="M569 148.62v8.3h8.5" stroke="#666" stroke-width="0.8" fill="none"/><rect x="569.5" y="148.92" width="4" height="1.8" fill="#4a90d9"/><rect x="569.5" y="151.32" width="7.5" height="2.3" fill="#f3b04c"/><rect x="569.5" y="154.12" width="3.2" height="1.8" fill="#555"/><circle cx="572.8" cy="164.64" r="4" fill="#555"/><path d="M572.8 164.64 v-4 a4 4 0 0 1 4 4z" fill="#f3b04c"/><path d="M572.8 164.64 h4 a4 4 0 0 1 -6.5 3.1z" fill="#4a90d9"/><path d="M568.8 180.56 v-7 l2.5 3 2.5-3 3.3 2.3v7.2z" fill="#5a5a5a"/><path d="M568.8 180.56 v-3.5 l2.5 1.5 3-2 2.8 0.8v5.7z" fill="#4a90d9"/><path d="M569 183.78v8.3h8.5" stroke="#666" stroke-width="0.8" fill="none"/><path d="M569.6 187.88 l2.3-4 2.2 2.5 2.8-2.3" stroke="#f3a04c" stroke-width="0.9" fill="none"/><path d="M569.6 190.88 l2.3-2.5 2.2 1.5 2.8-3.5" stroke="#4a90d9" stroke-width="0.9" fill="none"/><path d="M569 195.5v8.3h8.5" stroke="#666" stroke-width="0.6" fill="none"/><rect x="570.6" y="201.3" width="1.2" height="1.2" fill="#4a90d9"/><rect x="572.1" y="198.8" width="1.2" height="1.2" fill="#4a90d9"/><rect x="574.1" y="200.3" width="1.2" height="1.2" fill="#4a90d9"/><rect x="575.6" y="196.8" width="1.2" height="1.2" fill="#f3a04c"/><rect x="573.1" y="196.3" width="1.2" height="1.2" fill="#f3a04c"/><rect x="575.4" y="202.3" width="1.2" height="1.2" fill="#f3a04c"/><rect x="571.1" y="197.3" width="1.2" height="1.2" fill="#4a90d9"/><path d="M569 207.22v8.3h8.5" stroke="#666" stroke-width="0.6" fill="none"/><circle cx="571.6" cy="209.22" r="1.8" fill="#f3b04c"/><circle cx="575.6" cy="211.02" r="1.3" fill="#4a90d9"/><circle cx="571.1" cy="213.32" r="1" fill="#4a90d9"/><circle cx="574.1" cy="214.02" r="1" fill="#f3a04c"/><path d="M568.6 222.74 l4.3-3.6 4.3 3.6-1.5 4.3h-5.6z" fill="#bcd9f2" stroke="#4a90d9" stroke-width="0.8"/><path d="M571.8 222.04 l2.2 2.2 M574 222.04 l-2.2 2.2" stroke="#e04040" stroke-width="0.9"/><circle cx="572.9" cy="223.54" r="1.5" fill="none" stroke="#e04040" stroke-width="0.7"/><path d="M569 230.66v8.3h8.5" stroke="#555" stroke-width="0.7" fill="none"/><rect x="570.6" y="234.96" width="1.3" height="4" fill="#555"/><rect x="572.8" y="235.96" width="1.3" height="3" fill="#555"/><rect x="574.9" y="234.46" width="1.3" height="4.5" fill="#555"/><path d="M571.2 231.96v2M575.5 231.16v2" stroke="#777" stroke-width="0.5"/><path d="M569 242.38v8.3h8.5" stroke="#555" stroke-width="0.7" fill="none"/><rect x="570.1" y="245.68" width="1.6" height="5" fill="#4a90d9"/><rect x="572.4" y="244.18" width="1.6" height="6.5" fill="#2d75c6"/><rect x="574.7" y="245.18" width="1.6" height="5.5" fill="#4a90d9"/><path d="M569.6 242.68 l2.3 3 2.2-2.2 2.8 1.5" stroke="#e04a4a" stroke-width="0.8" fill="none"/></svg>
<svg class="a" style="left:0;top:0" width="1024" height="576"><defs><linearGradient id="cb" x1="0" x2="1"><stop offset="0" stop-color="#2f7fd0"/><stop offset="0.5" stop-color="#6ab2ee"/><stop offset="1" stop-color="#3a86d2"/></linearGradient><linearGradient id="co" x1="0" x2="1"><stop offset="0" stop-color="#e89a3a"/><stop offset="0.5" stop-color="#fbd27a"/><stop offset="1" stop-color="#e8a040"/></linearGradient><linearGradient id="cd" x1="0" x2="1"><stop offset="0" stop-color="#3a3a3a"/><stop offset="0.5" stop-color="#6a6a6a"/><stop offset="1" stop-color="#444"/></linearGradient></defs><rect x="657.6" y="139.9" width="32" height="28.3" fill="#f6f6f6"/><rect x="732.6" y="139.9" width="32" height="28.3" fill="#f6f6f6"/><rect x="808.6" y="139.9" width="32" height="28.3" fill="#f6f6f6"/><rect x="882.6" y="139.9" width="32" height="28.3" fill="#f6f6f6"/><path d="M661.3 146.2 L664.5 143.6 H684.8 V161 L682 163.4 H661.3 Z" fill="#fff" stroke="#8a8a8a" stroke-width="0.9"/><path d="M664.5 143.6 V161 H684.8 M661.3 163.4 L664.5 161" stroke="#b0b0b0" stroke-width="0.6" fill="none"/><path d="M663.5 162.6 L665.1 154 L666.8 162.6 Z" fill="url(#cb)"/><path d="M665.5 162.6 L667.2 150.5 L668.9 162.6 Z" fill="url(#co)"/><path d="M667 162.6 L669.2 148.5 L671.5 162.6 Z" fill="url(#cd)"/><path d="M672 162.6 L673.6 150.5 L675.3 162.6 Z" fill="url(#cb)"/><path d="M674 162.6 L676.5 146.8 L679 162.6 Z" fill="url(#co)"/><path d="M678 162.6 L680.4 155.5 L683 162.6 Z" fill="url(#cd)"/><path d="M661.3 163.4 H682 L684.8 161" stroke="#666" stroke-width="0.9" fill="none"/><path d="M736.3 146.2 L739.5 143.6 H760.3 V161 L757.5 163.4 H736.3 Z" fill="#fff" stroke="#8a8a8a" stroke-width="0.9"/><path d="M739.5 143.6 V161 H760.3 M736.3 163.4 L739.5 161" stroke="#b0b0b0" stroke-width="0.6" fill="none"/><path d="M739.2 162.8 L743 148.5 L747.8 162.8 Z" fill="url(#cb)"/><path d="M740.26 158.8 L743 148.5 L746.46 158.8 Z" fill="url(#co)"/><path d="M741.4 154.51 L743 148.5 L745.02 154.51 Z" fill="url(#cd)"/><path d="M748.9 162.5 L752.5 145.3 L758 162.5 Z" fill="url(#cb)"/><path d="M749.91 157.68 L752.5 145.3 L756.46 157.68 Z" fill="url(#co)"/><path d="M750.99 152.52 L752.5 145.3 L754.81 152.52 Z" fill="url(#cd)"/><path d="M736.3 163.4 H757.5 L760.3 161" stroke="#666" stroke-width="0.9" fill="none"/><path d="M811.4 146.2 L814.6 143.6 H835.4 V161 L832.6 163.4 H811.4 Z" fill="#fff" stroke="#8a8a8a" stroke-width="0.9"/><path d="M814.6 143.6 V161 H835.4 M811.4 163.4 L814.6 161" stroke="#b0b0b0" stroke-width="0.6" fill="none"/><path d="M814.6 162.8 L818.2 145 L823.2 162.8 Z" fill="url(#cb)"/><path d="M815.61 157.82 L818.2 145 L821.8 157.82 Z" fill="url(#co)"/><path d="M816.69 152.48 L818.2 145 L820.3 152.48 Z" fill="url(#cd)"/><path d="M824.3 162.5 L827.7 145 L833.5 162.5 Z" fill="url(#cb)"/><path d="M825.25 157.6 L827.7 145 L831.88 157.6 Z" fill="url(#co)"/><path d="M826.27 152.35 L827.7 145 L830.14 152.35 Z" fill="url(#cd)"/><path d="M811.4 163.4 H832.6 L835.4 161" stroke="#666" stroke-width="0.9" fill="none"/><path d="M887.4 150.5 L897.2 144.2 H911 V156.5 L902.3 163.4 H887.4 Z" fill="#fff" stroke="#9a9a9a" stroke-width="0.9"/><path d="M897.2 144.2 V156.5 H911" stroke="#bbb" stroke-width="0.6" fill="none"/><path d="M896.5 157 L899.7 146.3 L903 157 Z" fill="url(#cd)"/><path d="M903.5 157 L906.7 147.8 L910 157 Z" fill="url(#cd)"/><path d="M892.5 160 L895.7 150.3 L899 160 Z" fill="url(#co)"/><path d="M899 160 L902.2 152.8 L905.5 160 Z" fill="url(#co)"/><path d="M889.5 162.8 L892.7 151.8 L896 162.8 Z" fill="url(#cb)"/><path d="M895.5 162.8 L898.5 155.5 L901.5 162.8 Z" fill="url(#cb)"/><path d="M887.4 163.4 H902.3 L911 156.5" stroke="#666" stroke-width="0.9" fill="none"/></svg>
<div class="a" style="left:636.8px;top:191.2px;width:7.4px;height:7.8px;background:#1e9ad6;border-radius:1.2px"></div>
<svg class="a" style="left:637px;top:191.5px" width="8" height="8"><path d="M1.6 3.9L3.1 5.4L5.8 2.3" stroke="#fff" stroke-width="1.1" fill="none"/></svg>
<div class="t" style="left:645.6px;top:192px;font-size:7.2px;color:#4a4a4a">Aparência 3D</div>
<div class="a" style="left:694px;top:186.3px;width:244px;height:17.7px;background:#f7f7f7;border:1px solid #dcdcdc;border-radius:2px"></div>
<div class="t" style="left:699.5px;top:192px;font-size:7.2px;color:#4a4a4a">Realista</div>
<svg class="a" style="left:925px;top:193px" width="8" height="5"><path d="M0.5 0.5H7.5L4 4.2Z" fill="#222"/></svg>
<div class="t" style="left:635.5px;top:206.5px;font-size:7.2px;color:#4a4a4a">Forma</div>
<div class="a" style="left:635.3px;top:216.4px;width:302.7px;height:76.2px;background:#fff;border:1px solid #dedede"></div>
<div class="a" style="left:636.2px;top:252px;width:301.3px;height:11.7px;background:#1e9ad6"></div>
<div class="t" style="left:637.8px;top:218.8px;font-size:7.2px;color:#4a4a4a">Barra</div>
<div class="t" style="left:637.8px;top:230.5px;font-size:7.2px;color:#4a4a4a">Cilindro</div>
<div class="t" style="left:637.8px;top:242.2px;font-size:7.2px;color:#4a4a4a">Cone</div>
<div class="t" style="left:637.8px;top:253.9px;font-size:7.2px;color:#fff">Pirâmide</div>
<div class="a" style="left:560.4px;top:312.3px;width:51.4px;height:17.5px;background:#f7f7f7;border:1px solid #dcdcdc;border-radius:2px"></div>
<div class="t" style="left:560.7px;top:317.6px;width:50.8px;text-align:center;font-size:7.2px;color:#4a4a4a">Ajuda</div>
<div class="a" style="left:730px;top:312.3px;width:51.4px;height:17.5px;background:#f4f4f4;border:1px solid #dcdcdc;border-radius:2px"></div>
<div class="t" style="left:730.3px;top:317.6px;width:50.8px;text-align:center;font-size:7.2px;color:#a8a8a8">&lt; Anterior</div>
<div class="a" style="left:784.4px;top:312.3px;width:51.4px;height:17.5px;background:#f7f7f7;border:1px solid #dcdcdc;border-radius:2px"></div>
<div class="t" style="left:784.7px;top:317.6px;width:50.8px;text-align:center;font-size:7.2px;color:#4a4a4a">Próximo &gt;</div>
<div class="a" style="left:839.1px;top:312.3px;width:50.9px;height:17.5px;background:#f7f7f7;border:1px solid #dcdcdc;border-radius:2px"></div>
<div class="t" style="left:839.4px;top:317.6px;width:50.3px;text-align:center;font-size:7.2px;color:#4a4a4a">Cancelar</div>
<div class="a" style="left:893.2px;top:312.3px;width:51.4px;height:17.5px;background:#f7f7f7;border:1px solid #dcdcdc;border-radius:2px"></div>
<div class="t" style="left:893.5px;top:317.6px;width:50.8px;text-align:center;font-size:7.2px;color:#4a4a4a">Finalizar</div>
<div class="a" style="left:985.5px;top:84.5px;width:7px;height:444.5px;background:#fafafa"></div>
<div class="a" style="left:18px;top:522.7px;width:968px;height:6.3px;background:#fafafa"></div>
<div class="a" style="left:992.3px;top:53px;width:0.8px;height:489px;background:#cfcfcf"></div>
<div class="a" style="left:1004.7px;top:60.6px;width:7.3px;height:1.1px;background:#3a3a3a"></div>
<div class="a" style="left:1004.7px;top:63.1px;width:7.3px;height:1.1px;background:#3a3a3a"></div>
<div class="a" style="left:1004.7px;top:65.8px;width:7.3px;height:1.1px;background:#3a3a3a"></div>
<svg class="a" style="left:1003px;top:82px" width="11" height="11"><rect x="0.6" y="0.6" width="9.8" height="9.8" fill="#fff" stroke="#555" stroke-width="0.9"/><rect x="0.6" y="0.6" width="9.8" height="1.6" fill="#555"/><path d="M2.3 5h6.4M2.3 7.3h6.4" stroke="#3d8fd6" stroke-width="0.7"/><path d="M5.6 4v2M4 6.3v2" stroke="#3d8fd6" stroke-width="0.8"/></svg>
<div class="a" style="left:985px;top:75.5px;width:6px;height:1.2px;background:#555"></div>
<div class="a" style="left:987.4px;top:79.3px;width:2.7px;height:213px;background:#a8a8a8;border-radius:1.3px"></div>
<div class="a" style="left:992.2px;top:278px;width:3.6px;height:38.5px;background:#2e2e2e"></div>
<svg class="a" style="left:992.5px;top:295px" width="3" height="4"><path d="M0.3 0.3L2.6 2L0.3 3.7Z" fill="#ddd"/></svg>
<div class="a" style="left:1.5px;top:524.6px;width:459px;height:3.3px;background:#a6a6a6;border-radius:1.6px"></div>
<div class="a" style="left:983.5px;top:523.2px;width:1.8px;height:5.5px;background:#555"></div>
<div class="a" style="left:0;top:529px;width:992.3px;height:13px;background:#f4f4f4"></div>
<svg class="a" style="left:0;top:528px" width="70" height="14"><g fill="none" stroke="#c8c8c8" stroke-width="0.8"><path d="M5.5 3v7M10 3.5l-3.2 3 3.2 3M11.5 3.5l-3.2 3 3.2 3"/><path d="M17.5 3.5l-2.2 3 2.2 3M20 3.5l-2.2 3 2.2 3"/><path d="M30 3.5l2.2 3-2.2 3M32.5 3.5l2.2 3-2.2 3"/><path d="M42 3.5l3.2 3-3.2 3M43.5 3.5l3.2 3-3.2 3M48.5 3v7"/></g><path d="M57.5 2.3h4l2 2v7.2h-6z" fill="#fff" stroke="#bbb" stroke-width="0.6"/><circle cx="63.3" cy="8" r="1.7" fill="#3d8fd6"/><circle cx="63.3" cy="8" r="0.6" fill="#fff"/></svg>
<div class="a" style="left:71px;top:529px;width:42px;height:12.5px;background:#fafafa"></div>
<div class="a" style="left:71px;top:540.3px;width:42px;height:1.3px;background:#333"></div>
<div class="t" style="left:71px;top:531.5px;width:42px;text-align:center;font-size:6.6px;font-weight:bold;color:#2a2a2a">Planilha1</div>
<div class="a" style="left:0;top:542px;width:1024px;height:1px;background:#dcdcdc"></div>
<div class="a" style="left:1009.5px;top:543px;width:0.6px;height:10px;background:#e2e2e2"></div>
<div class="t" style="left:5px;top:546.2px;font-size:6.5px;color:#555">Seleção: Área do gráfico</div>
<div class="a" style="left:0;top:554.2px;width:1024px;height:21.8px;background:#1b1b1b"></div>
<div class="a" style="left:1019px;top:554.2px;width:5px;height:21.8px;background:#333"></div>
<div class="a" style="left:27.3px;top:555px;width:0.8px;height:21px;background:#262626"></div>
<svg class="a" style="left:0;top:554px" width="150" height="22"><circle cx="11.7" cy="10.8" r="8" fill="none" stroke="#e0e0e0" stroke-width="1.3"/><path d="M7.4 7.2V12.1Q7.4 14 9.3 14H14.3Q16.2 14 16.2 12.1V9.6Q16.2 7.8 14.7 7.8Q13.2 7.8 13.2 9.6V12.1M13.2 9.6Q13.2 7.8 11.7 7.8Q10.2 7.8 10.2 9.6V12.1" fill="none" stroke="#e0e0e0" stroke-width="1.15"/><path d="M35 4.5h5l1.3 1.5h8.3v11h-14.6z" fill="#f0b95e"/><rect x="35" y="7" width="14.6" height="10" fill="#f6c774"/><rect x="36" y="6.3" width="12.6" height="0.8" fill="#fbe6bd"/><defs><linearGradient id="rg" x1="1" y1="0" x2="0" y2="1"><stop offset="0" stop-color="#f5773a"/><stop offset="1" stop-color="#e8345c"/></linearGradient></defs><rect x="58.3" y="3" width="15.6" height="15" rx="3" fill="url(#rg)"/><path d="M68.9 7.2A4.2 4.2 0 1 1 63.5 7.3" fill="none" stroke="#fff" stroke-width="2"/><path d="M66.6 4.8l3.2 1.9-3 2.3z" fill="#fff"/><circle cx="60.6" cy="4.6" r="3.8" fill="#2f8fd8"/><rect x="82" y="3" width="15" height="15" rx="3" fill="#2f2f2f"/><path d="M84.5 6.5h1.5M85.2 5.5v3M86.8 9h2.8" stroke="#ddd" stroke-width="0.8"/><rect x="105.8" y="3" width="14.6" height="15" rx="3" fill="#2b3a2e"/><path d="M107 11h3l1-3 1.5 6 1.2-4 0.8 1h4" fill="none" stroke="#35c04a" stroke-width="0.8"/><rect x="128.9" y="3" width="14.9" height="15" rx="3" fill="#2fae2f"/><rect x="131.6" y="6.5" width="9.6" height="7.5" fill="none" stroke="#fff" stroke-width="0.8"/><path d="M131.6 9h9.6M131.6 11.5h9.6M134.8 6.5v7.5M138 6.5v7.5" stroke="#fff" stroke-width="0.6"/><rect x="32.5" y="20.2" width="20.3" height="1.8" fill="#3592d8"/><rect x="56" y="20.2" width="20.3" height="1.8" fill="#3592d8"/><rect x="79.4" y="20.2" width="20.3" height="1.8" fill="#3592d8"/><rect x="103" y="20.2" width="20.4" height="1.8" fill="#3592d8"/><rect x="126.3" y="20.2" width="20.6" height="1.8" fill="#3592d8"/></svg>
<div class="t" style="left:58.4px;top:556px;width:4.4px;text-align:center;font-size:5.2px;font-weight:bold;color:#fff">3</div>
<svg class="a" style="left:920px;top:556px" width="80" height="18"><rect x="6.3" y="5.5" width="5.8" height="8.2" rx="2.9" fill="none" stroke="#ddd" stroke-width="0.9"/><path d="M8 7.8l2.5 2.3-1.3 1.2v-4.2l1.3 1.2-2.5 2.3" fill="none" stroke="#ddd" stroke-width="0.6"/><rect x="19.3" y="6.3" width="7.2" height="7.3" rx="0.8" fill="none" stroke="#ddd" stroke-width="0.9"/><path d="M21.5 5.3h3M21.7 8.3v3.3M24.1 8.3v3.3M21.7 10h2.4" stroke="#ddd" stroke-width="0.8"/><path d="M32.6 6.5l4-1.3 4 1.3v3a4.5 5 0 0 1-4 4.5a4.5 5 0 0 1-4-4.5z" fill="none" stroke="#ddd" stroke-width="0.9"/><path d="M35 8h1.5v3" stroke="#ddd" stroke-width="0.7" fill="none"/><circle cx="39.5" cy="12.2" r="1.5" fill="#f26d21"/><path d="M48.5 7.3a7 7 0 0 1 8.3 0L52.65 12.5z" fill="#ddd"/><path d="M63.5 8.3h1.8l2.6-2.3v8l-2.6-2.3h-1.8z" fill="#ddd"/><path d="M69.3 7.5a3.5 3.5 0 0 1 0 4.3M70.8 6.5a5 5 0 0 1 0 6.3" fill="none" stroke="#aaa" stroke-width="0.7"/></svg>
<div class="t" style="left:997.4px;top:561.3px;font-size:7.6px;color:#e0e0e0">11:12</div>
<div class="a" style="left:983px;top:9.2px;width:4.2px;height:0.9px;background:#c4c4c4"></div>
<div class="a" style="left:997px;top:6px;width:5.2px;height:5px;border:1px solid #c4c4c4"></div>
<svg class="a" style="left:1009.5px;top:3.2px" width="11" height="11"><circle cx="5.3" cy="5.2" r="5" fill="#a6a6a6"/><path d="M3.5 3.4L7.1 7M7.1 3.4L3.5 7" stroke="#fff" stroke-width="1.2"/></svg>
<svg class="a" style="left:670px;top:257px" width="14" height="15"><path d="M3 3.2L3.3 12.6L5.6 10.2L10 9.4Z" fill="#000" stroke="#000" stroke-width="0.9" stroke-linejoin="round"/></svg>
</body></html>
